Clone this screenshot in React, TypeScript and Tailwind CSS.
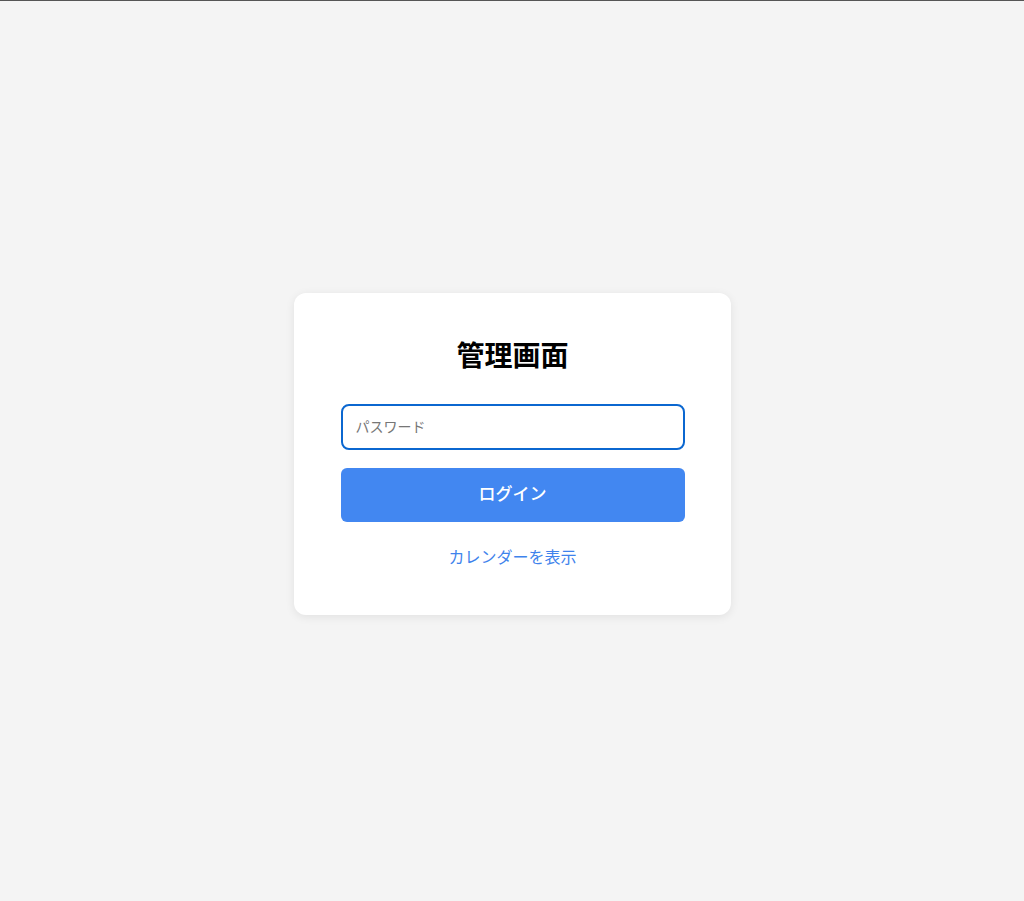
import React, { useState } from 'react';

export default function App() {
  const [password, setPassword] = useState('');

  const handleLogin = (e: React.FormEvent) => {
    e.preventDefault();
  };

  return (
    <div className="min-h-[901px] bg-[#f4f4f4] border-t border-[#555] flex justify-center font-['Liberation_Sans','Noto_Sans_CJK_JP',sans-serif]">
      <div className="mt-[292px] w-[437px] h-[322px] bg-white rounded-xl shadow-[0_2px_10px_rgba(0,0,0,0.08)] pt-[47px] pl-[47px] pr-[46px]">
        <h1 className="text-[28px] leading-[34px] font-bold text-black text-center">管理画面</h1>
        <form onSubmit={handleLogin} className="mt-[30px]">
          <input
            type="password"
            autoFocus
            value={password}
            onChange={(e) => setPassword(e.target.value)}
            placeholder="パスワード"
            className="block w-full h-[46px] px-[13px] text-[14px] text-black border-2 border-[#0b67d0] rounded-lg outline-none placeholder:text-[#767676] bg-white"
          />
          <button
            type="submit"
            className="mt-[18px] w-full h-[54px] bg-[#4287f1] text-white text-[17px] font-medium rounded-md"
          >
            ログイン
          </button>
        </form>
        <div className="mt-[24px] text-center">
          <a href="#" className="text-[16px] leading-[24px] text-[#3f83ec]">
            カレンダーを表示
          </a>
        </div>
      </div>
    </div>
  );
}
